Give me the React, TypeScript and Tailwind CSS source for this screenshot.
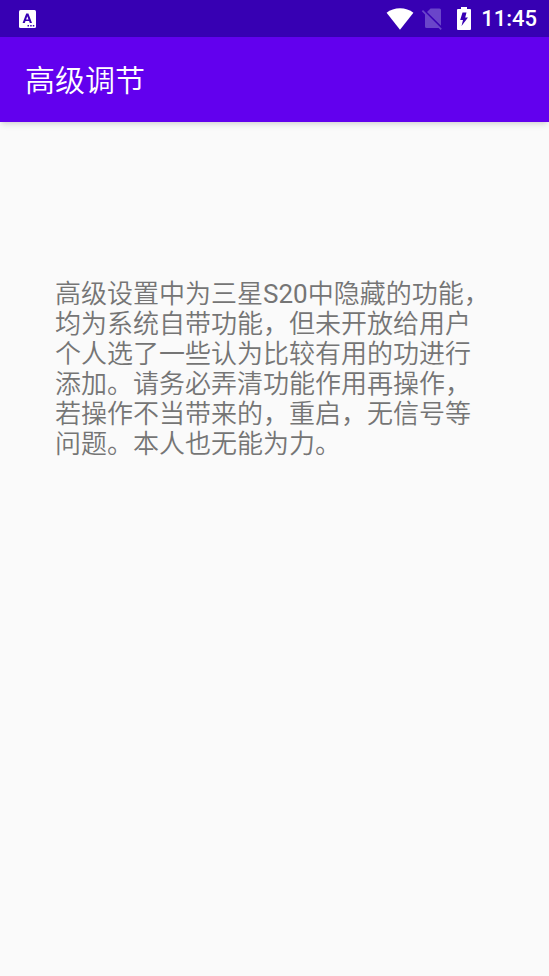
const StatusBar = () => {
  return (
    <header className="flex h-[37px] items-center justify-between bg-[#3700b3] pr-3 pl-[19px] text-white">
      <svg width="17" height="18" viewBox="0 0 17 18" aria-label="键盘">
        <rect width="17" height="18" rx="1.500" fill="#fff" />
        <path
          d="M7.200 3.600h2.200L13 13h-2.200l-.7-1.900H6.500L5.800 13H3.600zM8.300 6.200L7.100 9.500h2.400z"
          fill="#3700b3"
        />
        <path
          d="M8.500 15H10v1.500H8.500zM11.200 15h1.500v1.500h-1.500zM13.800 15h1.500v1.500h-1.500z"
          fill="#3700b3"
        />
      </svg>

      <div className="flex items-center">
        <svg width="28" height="22" viewBox="0 0 28 22" aria-label="WLAN">
          <path d="M14 21.800L.6 4.800C7.500-1.200 20.500-1.200 27.400 4.800z" fill="#fff" />
        </svg>
        <svg
          className="ml-[7px]"
          width="22"
          height="22"
          viewBox="0 0 22 22"
          aria-label="无 SIM 卡"
        >
          <path
            d="M20 17.800V2A1.500 1.500 0 0 0 18.500.5H9.500L6 4zM2 2L.8 3.200 4 6.400V18.500A1.500 1.500 0 0 0 5.500 20H17.600l2 2 1.200-1.200z"
            fill="#6a45ca"
          />
        </svg>
        <svg
          className="mr-2.5 ml-3.5"
          width="14"
          height="23"
          viewBox="0 0 14 23"
          aria-label="正在充电"
        >
          <path
            d="M4 0h6v2H13a1 1 0 0 1 1 1v19a1 1 0 0 1-1 1H1a1 1 0 0 1-1-1V3a1 1 0 0 1 1-1h3z"
            fill="#fff"
          />
          <path d="M9.500 5.500L8.200 10.500h2.800L4.500 19l1.500-6H3.200l2.300-7.500z" fill="#3700b3" />
        </svg>
        <time className="text-[22px] leading-6 font-medium">11:45</time>
      </div>
    </header>
  );
};

const App = () => {
  return (
    <div className="min-h-screen bg-[#fafafa] font-['Roboto','Noto_Sans_CJK_SC',sans-serif]">
      <StatusBar />
      <div className="flex h-[85px] items-center bg-[#6200ee] px-[25px] pt-0.5 shadow-md">
        <h1 className="text-[30px] leading-9 font-[350] text-white">高级调节</h1>
      </div>
      <main className="px-[55px] pt-[157px]">
        <p className="text-[26px] leading-[30px] font-[350] text-[#757575]">
          高级设置中为三星<span className="font-normal">S20</span>中隐藏的功能，
          <br />
          均为系统自带功能，但未开放给用户
          <br />
          个人选了一些认为比较有用的功进行
          <br />
          添加。请务必弄清功能作用再操作，
          <br />
          若操作不当带来的，重启，无信号等
          <br />
          问题。本人也无能为力。
        </p>
      </main>
    </div>
  );
};

export default App;
